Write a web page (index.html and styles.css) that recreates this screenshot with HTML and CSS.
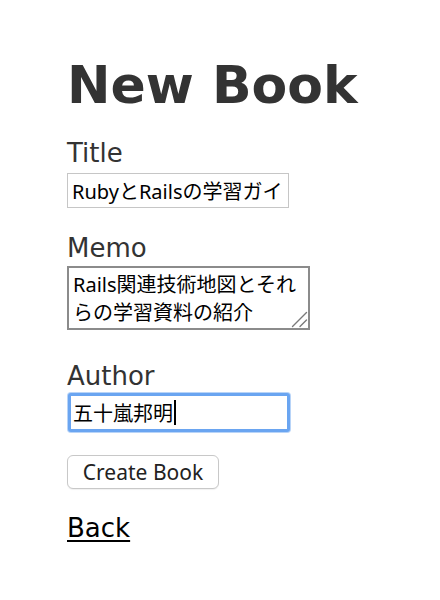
FILE: index.html
```
<!DOCTYPE html>
<html lang="ja">
<head>
<meta charset="utf-8">
<title>New Book</title>
<link rel="stylesheet" href="styles.css">
</head>
<body>
<div class="page">
  <h1 class="heading">New Book</h1>
  <form class="book-form">
    <div class="field field-title">
      <label class="field-label" for="book_title">Title</label>
      <input class="text-input" type="text" id="book_title" value="RubyとRailsの学習ガイド">
    </div>
    <div class="field field-memo">
      <label class="field-label" for="book_memo">Memo</label>
      <div class="memo-wrap">
        <textarea class="memo-input" id="book_memo">Rails関連技術地図とそれらの学習資料の紹介</textarea>
        <svg class="resize-grip" width="17" height="17" viewBox="0 0 17 17" aria-hidden="true">
          <line x1="15.5" y1="1.5" x2="1.5" y2="15.5" stroke="#7a7a7a" stroke-width="1.4" stroke-linecap="round"/>
          <line x1="15.5" y1="9" x2="9" y2="15.5" stroke="#7a7a7a" stroke-width="1.4" stroke-linecap="round"/>
        </svg>
      </div>
    </div>
    <div class="field field-author">
      <label class="field-label" for="book_author">Author</label>
      <div class="author-wrap">
        <input class="text-input author-input" type="text" id="book_author" value="五十嵐邦明">
        <span class="caret"></span>
      </div>
    </div>
    <div class="actions">
      <button type="button" class="submit-button">Create Book</button>
    </div>
  </form>
  <a class="back-link" href="#">Back</a>
</div>
</body>
</html>
```

FILE: styles.css
```
html, body {
  margin: 0;
  padding: 0;
  background: #fff;
}

body {
  font-family: "DejaVu Sans", Verdana, sans-serif;
  font-size: 26px;
  line-height: 36px;
  color: #333;
}

.page {
  padding: 55px 0 0 67px;
}

.heading {
  margin: 0;
  font-size: 52px;
  line-height: 60px;
  font-weight: bold;
  color: #333;
}

.book-form {
  margin: 20px 0 0 0;
}

.field-label {
  display: block;
  height: 36px;
}

.field-memo {
  margin-top: 22px;
}

.field-author {
  margin-top: 28px;
}

.text-input {
  display: block;
  box-sizing: border-box;
  width: 222px;
  height: 35px;
  margin: 2px 0 0 0;
  padding: 0 4px;
  border: 1px solid #c6c6c6;
  border-radius: 0;
  background: #fff;
  color: #000;
  font-family: "Noto Sans", "Noto Sans CJK JP", sans-serif;
  font-size: 20px;
  line-height: 26px;
  outline: none;
}

.author-wrap {
  position: relative;
  width: 224px;
}

.author-input {
  width: 222px;
  height: 39px;
  margin: -1px 0 0 1px;
  padding: 0 2px;
  border: 3px solid #6aa5f1;
  border-radius: 3px;
  box-shadow: 0 0 0 1px #b8d4f8;
}

.caret {
  position: absolute;
  left: 107px;
  top: 7px;
  width: 2px;
  height: 25px;
  background: #000;
}

.memo-wrap {
  position: relative;
  width: 243px;
}

.memo-input {
  display: block;
  box-sizing: border-box;
  width: 243px;
  height: 64px;
  margin: 0;
  padding: 3px 4px 1px 4px;
  border: 2px solid #8b8b8b;
  border-radius: 0;
  background: #fff;
  color: #000;
  font-family: "Noto Sans", "Noto Sans CJK JP", sans-serif;
  font-size: 20px;
  line-height: 28px;
  overflow: hidden;
  resize: none;
  outline: none;
}

.resize-grip {
  position: absolute;
  right: 2px;
  bottom: 2px;
  pointer-events: none;
}

.actions {
  margin-top: 23px;
}

.submit-button {
  display: block;
  box-sizing: border-box;
  width: 152px;
  height: 34px;
  margin: 0;
  padding: 0;
  border: 1px solid #c8c8c8;
  border-radius: 6px;
  background: #fff;
  box-shadow: 0 1px 1px rgba(0, 0, 0, 0.06);
  color: #222;
  font-family: "Noto Sans", sans-serif;
  font-size: 21px;
  line-height: 32px;
}

.back-link {
  display: inline-block;
  margin-top: 21px;
  color: #000;
  text-decoration: underline;
  text-underline-offset: 3px;
  text-decoration-thickness: 2px;
}
```
